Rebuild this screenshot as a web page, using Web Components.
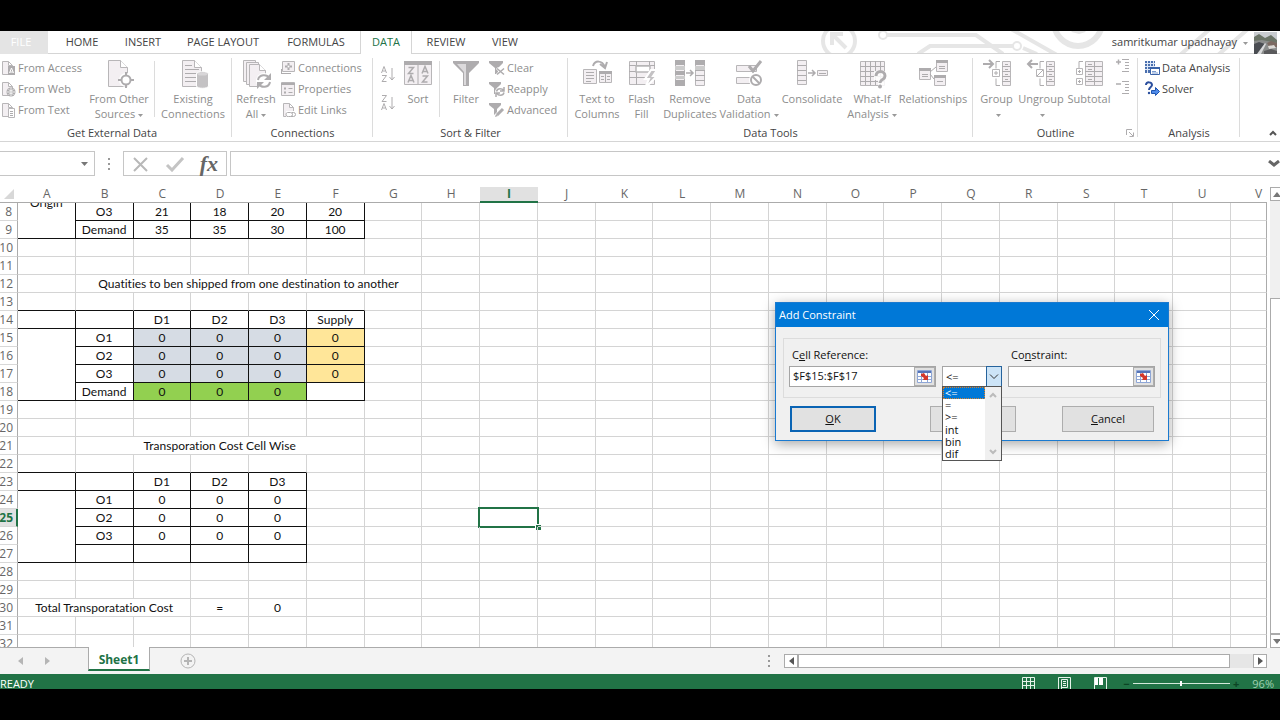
<!DOCTYPE html>
<html lang="en">
<head>
<meta charset="utf-8">
<title>Sheet1</title>
<style>
    html, body { height: 100%; }
    body {
        margin: 0;
        overflow: hidden;
        background: #000;
        color: #444;
        font: 11px/15px "Open Sans", "Noto Sans", sans-serif;
    }
</style>
</head>
<body>
<excel-window></excel-window>

<script>
const SMALL_PAGE = 'M2.5 1.5h6l4 4v9h-10z M8.5 1.5v4h4';

// [viewBox width, viewBox height, markup]
const ICONS = {
    access  : [16, 16, `<path class="o" d="${SMALL_PAGE}"/><rect class="d" x="8" y="6" width="7" height="9"/><path stroke="#fff" fill="none" d="M9.500 13l2-5 2 5M10 12h3"/>`],
    web     : [16, 16, `<path class="o" d="${SMALL_PAGE}"/><circle class="d" cx="11" cy="11" r="4.500"/><path stroke="#eee" fill="none" d="M7 11h8M11 7v8M8.500 8.500c2 1.500 3 1.500 5 0M8.500 13.500c2-1.500 3-1.500 5 0"/>`],
    text    : [16, 16, `<path class="o" d="${SMALL_PAGE}"/><path class="o w" d="M8.500 6.500h6v9h-6z"/><path class="l" d="M10 9.500h3M10 11.500h3M10 13.500h3"/>`],
    other   : [32, 32, `<path class="o" d="M5.500 3.500h12l7 7v19h-19z"/><path class="o w" d="M17.500 3.500v7h7"/><circle cx="23" cy="23" r="7" fill="#fff"/><circle class="l t" cx="23" cy="23" r="4.500"/><path class="l t" d="M23 15v4M23 27v4M15 23h4M27 23h4"/>`],
    existing: [32, 32, `<path class="o" d="M5.500 3.500h12l7 7v19h-19z"/><path class="o w" d="M17.500 3.500v7h7"/><path class="l" d="M8 8.500h7M8 12.500h14M8 16.500h11M8 20.500h11M8 24.500h11"/><path fill="#c4c2c4" stroke="#fff" d="M19.500 17v12c0 3 12 3 12 0V17c0-3-12-3-12 0z"/><ellipse cx="25.500" cy="17" rx="5" ry="1.500" fill="#d8d6d8"/>`],
    refresh : [32, 32, `<path class="o" d="M3.500 3.500h12v21h-12z"/><path class="o" d="M6.500 5.500h12v22h-12z"/><path class="o" d="M9.500 7.500h10l6 6v16h-16z"/><path class="o w" d="M19.500 7.500v6h6"/><circle cx="24" cy="24" r="8" fill="#fff"/><path class="l t" d="M18 23c1-6 9-6 11-2M30 25c-1 6-9 6-11 2"/><path class="d" d="M31 16v7h-7zM17 32v-7h7z"/>`],
    connect : [16, 16, `<path class="o" d="M2.500 1.500h12v10h-12z"/><path class="l t" d="M8.500 3v7M5 6.500h7"/><circle cx="8.500" cy="6.500" r="1" fill="#fff"/><path class="l" d="M1 13.500h10M1.500 9v5"/>`],
    props   : [16, 16, `<path class="o" d="M1.500 1.500h13v13h-13z"/><path class="l t" d="M1 3h14M4 7.500h2M4 11.500h2"/><path class="l" d="M8.500 7.500h4M8.500 11.500h4"/>`],
    links   : [16, 16, `<path class="o" d="M3.500 1.500h6l4 4v9h-10z M9.500 1.500v4h4"/><path fill="#fff" d="M6 9h10v7H6z"/><path class="l" d="M7.500 10.500h3a2 2 0 0 1 0 4h-2a2 2 0 0 1-1-4M12 10.500h1.500a2 2 0 0 1 0 4h-3"/>`],
    az      : [16, 20, `<path class="l" d="M1.500 9L4 2.500 6.500 9M2.500 7h3M2 11.500h4.500L2 17.500h4.500M12 4v12M9.500 13l2.500 3 2.500-3"/>`],
    za      : [16, 20, `<path class="l" d="M2 2.500h4.500L2 8.500h4.500M1.500 17L4 10.500 6.500 17M2.500 15h3M12 4v12M9.500 13l2.500 3 2.500-3"/>`],
    sort    : [32, 32, `<path class="o" d="M2.500 4.500h27v23h-27z"/><path class="d" d="M2 4h28v4H2z"/><path class="l" d="M16 8v19"/><path class="l m" d="M6.500 10.500h5l-5 6h5M6 25.500l3-7 3 7M7 23.500h4M20 16.500l3-7 3 7M21 14.500h4M20.500 19h5l-5 6h5"/>`],
    filter  : [32, 32, `<path class="d" d="M3 4h26v2L19 16v13h-6V16L3 6z"/><path fill="#dcdadc" d="M7 7h9v21h-2V15z"/>`],
    clear   : [16, 16, `<path class="d" d="M0 1h14v2L9 8v6H6V8L0 3z"/><path stroke="#fff" stroke-width="3" d="M8 8l7 7M15 8l-7 7"/><path class="l m" d="M8 8.500l7 6M15 8.500l-7 6"/>`],
    reapply : [16, 16, `<path class="d" d="M0 1h12v2L8 7v6H5V7L0 3z"/><circle cx="11" cy="11" r="5" fill="#fff"/><path class="l m" d="M7.500 10.500c1-4 6-3 7-1M15 11.500c-1 4-6 3-7 1M15 6v4h-4M7 16v-4h4"/>`],
    advanced: [16, 16, `<path class="d" d="M0 1h12v2L8 7v6H5V7L0 3z"/><path stroke="#fff" stroke-width="4" d="M6 15L15 6"/><path class="l k" d="M8 13l6-6"/><path class="d" d="M6 15l1-3 2 2z"/>`],
    columns : [32, 32, `<path class="o" d="M2.500 12.500h13v14h-13z"/><path class="l" d="M5 15.500h8M5 18.500h8M5 21.500h8M5 24.500h5"/><path class="o" d="M18.500 15.500h12v10h-12z"/><path class="d" d="M18 14h13v3H18z"/><path class="l" d="M24.500 16v9M20 19.500h3M20 22.500h3M26 19.500h3M26 22.500h3"/><path class="l t" d="M12 9c2-6 9-6 12 1M19 7l5 4 2-6"/>`],
    flash   : [32, 32, `<path class="o" d="M3.500 4.500h25v23h-25z"/><path class="l" d="M3 8.500h26M3 14.500h26M3 20.500h18M10.500 4v24M23.500 4v12"/><path class="o w m" d="M10 9h14v6H10z"/><path stroke="#fff" stroke-width="2" fill="#c4c2c4" d="M25 13h6l-4 6h4L19 31l4-9h-4z"/>`],
    remove  : [32, 32, `<path class="o" d="M1.500 3.500h9v25h-9zM21.500 3.500h9v25h-9z"/><path class="d" d="M1 3h10v5H1zM1 14h10v4H1zM1 23h10v6H1zM21 3h10v5H21z"/><path fill="#ccc" d="M1 9h10v4H1zM1 19h10v3H1zM21 9h10v4H21z"/><path class="l" d="M21 13.500h10M21 18.500h10M21 23.500h10"/><path class="l m" d="M12 16h7M16 13l3 3-3 3"/>`],
    validate: [32, 32, `<path class="o" d="M3.500 8.500h20v6h-20zM3.500 20.500h15v6h-15z"/><path class="l k" d="M16 9l4 5 8-10"/><circle cx="23" cy="23" r="7" fill="#fff"/><circle class="l t" cx="23" cy="23" r="5"/><path class="l t" d="M19.500 19.500l7 7"/>`],
    consol  : [32, 32, `<path class="o" d="M1.500 3.500h9v24h-9z"/><path class="l" d="M1 8.500h9M1 13.500h9M1 18.500h9M1 23.500h9"/><path class="l m" d="M12 16h7M16 13l3 3-3 3"/><path class="o" d="M21.500 13.500h10v5h-10z"/><path class="l" d="M23 16.500h7"/>`],
    whatif  : [32, 32, `<path class="o" d="M4.500 4.500h24v24h-24z"/><path class="l" d="M4 9.500h24M4 14.500h24M4 19.500h24M4 24.500h24M9.500 4v24M14.500 4v24M19.500 4v24M24.500 4v24"/><path fill="#fff" d="M18 14h13v18h-9v-9h-4z" opacity=".85"/><path class="l k" d="M20 19c0-6 9-6 9 0 0 4-5 3-5 7"/><circle class="d" cx="24" cy="29.500" r="2"/>`],
    relation: [32, 32, `<path class="o" d="M2.500 12.500h11v10h-11zM19.500 4.500h11v10h-11zM17.500 18.500h11v10h-11z"/><path class="d" d="M2 11h12v3H2zM19 3h12v3H19zM17 18h12v3H17z"/><path class="l" d="M13 15l6-5M13 17l4 5M5 17.500h6M5 19.500h6M22 9.500h6M22 11.500h6M20 24.500h6"/>`],
    group   : [32, 32, `<path class="l t" d="M2 7h10M8 3l4 4-4 4"/><path class="o" d="M21.500 4.500h8v24h-8z"/><path class="l" d="M21 9.500h8M21 14.500h8M21 19.500h8M21 24.500h8M24 7.500h3M24 12.500h3M24 17.500h3M24 22.500h3M19 4.500h-4v7M19 28.500h-4v-7"/><path class="o w" d="M11.500 12.500h7v7h-7z"/><path class="l" d="M15 14v4M13 16h4"/>`],
    ungroup : [32, 32, `<path class="l t" d="M3 7h10M7 3L3 7l4 4"/><path class="o" d="M21.500 4.500h8v24h-8z"/><path class="l" d="M21 9.500h8M21 14.500h8M21 19.500h8M21 24.500h8M24 7.500h3M24 12.500h3M24 17.500h3M24 22.500h3M19 4.500h-4v7M19 28.500h-4v-7"/><path class="o w" d="M11.500 12.500h7v7h-7z"/><path class="l" d="M12 19l6-6"/>`],
    subtotal: [32, 32, `<path class="o" d="M12.500 4.500h17v24h-17z"/><path class="l" d="M12 9.500h17M12 14.500h17M12 19.500h17M12 24.500h17M21.500 4v24M15 7.500h4M15 12.500h4M15 17.500h4M15 22.500h4M10 4.500H6v7"/><path class="o w" d="M3.500 11.500h6v6h-6zM3.500 21.500h6v6h-6z"/><path class="l" d="M6.500 13v3M5 14.500h3M6.500 23v3M5 24.500h3"/>`],
    detail  : [16, 16, `<path class="l m" d="M1 5h5M3.500 2.500v5"/><path class="l" d="M7 2.500h7M10 5.500h4M10 8.500h4M10 11.500h4M7 14.500h7"/>`],
    hide    : [16, 16, `<path class="l m" d="M1 5h5"/><path class="l" d="M7 2.500h7M10 5.500h4M10 8.500h4M10 11.500h4M7 14.500h7"/>`],
    analysis: [16, 16, `<path fill="#4a6fae" d="M1 1h10v12H1z"/><path stroke="#dfe8f7" fill="none" d="M1 3.500h10M1 6.500h10M1 9.500h10M3.500 1v12M6.500 1v12M9.500 1v6"/><path fill="#fff" stroke="#3b63a8" d="M6.500 7.500h9v7h-9z"/><path fill="#3b63a8" d="M6 7h10v2H6z"/><path stroke="#7a9bd0" d="M8 11.500h4M8 13h6"/>`],
    solver  : [16, 16, `<path fill="none" stroke="#2b4f9e" stroke-width="2" d="M2 4c0-4 6-3 6 0 0 2-3 2-3 5"/><circle fill="#2b4f9e" cx="5" cy="12" r="1.200"/><path fill="#4f8bea" stroke="#1f55b0" d="M7.500 9.500h4v-3l4 4-4 4v-2h-4z"/>`],
    launcher: [8, 8, `<path class="l" d="M.500 6V.500H6M3 3l4 4M7.500 3.500v4h-4"/>`],
    collapse: [8, 6, `<path fill="none" stroke="#555" stroke-width="2" d="M1 5l3-3 3 3"/>`],
    expand  : [12, 8, `<path fill="none" stroke="#666" stroke-width="3" d="M1 1l5 4 5-4"/>`],
    cancel  : [18, 16, `<path fill="none" stroke="#b8b8b8" stroke-width="2" d="M2 2l13 13M15 2L2 15"/>`],
    check   : [20, 16, `<path fill="none" stroke="#c4c4c4" stroke-width="3" d="M2 9l5 5L18 2"/>`],
    prev    : [5, 8, `<path fill="#b5b5b5" d="M5 0v8L0 4z"/>`],
    next    : [5, 8, `<path fill="#b5b5b5" d="M0 0v8l5-4z"/>`],
    left    : [5, 8, `<path fill="#555" d="M5 0v8L0 4z"/>`],
    right   : [5, 8, `<path fill="#555" d="M0 0v8l5-4z"/>`],
    up      : [8, 5, `<path fill="#777" d="M0 5h8L4 0z"/>`],
    down    : [8, 5, `<path fill="#777" d="M0 0h8L4 5z"/>`],
    caret   : [5, 3, `<path fill="#999" d="M0 0h5L2.500 3z"/>`],
    dark    : [7, 4, `<path fill="#777" d="M0 0h7L3.500 4z"/>`],
    add     : [16, 16, `<circle fill="none" stroke="#b5b5b5" cx="8" cy="8" r="7"/><path stroke="#b5b5b5" stroke-width="2" d="M4 8h8M8 4v8"/>`],
    normal  : [14, 12, `<path fill="none" stroke="#e6f3ea" d="M.500 12V.500h12V12M0 4.500h13M0 8.500h13M4.500 0v12M8.500 0v12"/>`],
    layout  : [14, 12, `<path fill="none" stroke="#e6f3ea" d="M.500 12V.500h12V12M3.500 12V2.500h6v8h-6M5 4.500h3M5 6.500h3M5 8.500h3"/>`],
    breaks  : [14, 12, `<path fill="none" stroke="#e6f3ea" d="M.500 12V.500h12V12"/><path fill="#fff" d="M1 1h3v7H1zM5 1h4v7H5z"/>`],
    close   : [10, 10, `<path fill="none" stroke="#fff" d="M0 0l10 10M10 0L0 10"/>`],
    chevron : [10, 6, `<path fill="none" stroke="#333" d="M1 .500l4 4 4-4"/>`],
    listup  : [8, 6, `<path fill="none" stroke="#bbb" stroke-width="2" d="M1 5l3-3 3 3"/>`],
    listdown: [8, 6, `<path fill="none" stroke="#bbb" stroke-width="2" d="M1 1l3 3 3-3"/>`],
    picker  : [15, 13, `<path fill="#fff" stroke="#8ea6d6" d="M.500.500h14v12H.500z"/><path fill="#5574b8" d="M1 1h13v2H1z"/><path stroke="#8ea6d6" d="M1 6.500h13M1 9.500h13M4.500 3v9M10.500 3v9"/><path fill="#d3382b" d="M4 4l3-1 2 3 2-1v5H6l1-2-3-2z"/>`],
    photo   : [23, 22, `<path fill="#c9ccd0" d="M0 0h23v22H0z"/><path fill="#6c7568" d="M0 5l5-3 6 4 6-3 6 5v5H0z"/><path fill="#8b8d8c" d="M0 9l8-1 15 3v11H0z"/><path fill="#4a4d52" d="M0 12l5-2 6 2-6 10H0z"/><path fill="#d9dadb" d="M3 22l8-11 1 1-5 10z"/><path fill="#7c6a62" d="M13 11l4-2 6 2v4h-8z"/><path fill="#dcdad6" d="M14 14l6-1 2 3-7 1z"/><path fill="#5a5a5c" d="M10 19l7-2 6 2v3H10z"/>`],
    circuit : [470, 22, `<g fill="none" stroke="#e6e6e6" stroke-width="4"><circle cx="29" cy="10" r="16"/><path d="M36 17L23 4M22 14V3h11"/><path d="M77 4h89l27 19M108 23l12-8h83M201-2l46 26M213 17l14 6M370 24l30-26M408 24l30-26"/></g><g fill="#fff" stroke="#e6e6e6" stroke-width="2"><circle cx="73" cy="4" r="4"/><circle cx="207" cy="15" r="4"/></g><circle fill="none" stroke="#e6e6e6" stroke-width="6" cx="268" cy="-9" r="24"/><path fill="none" stroke="#e6e6e6" stroke-width="4" d="M262-1l7 2 6-2"/>`]
};


class AppIcon extends HTMLElement {
    connectedCallback(){
        const [w, h, body] = ICONS[this.getAttribute('name')];
        this.attachShadow({ mode : 'open' });
        this.shadowRoot.innerHTML = `
            <style>
                :host { display: inline-block; flex: none; line-height: 0; }
                .o { fill: #f3eff2; stroke: #b8b6b8; }
                .w { fill: #fff; }
                .d { fill: #aeacae; }
                .l { fill: none; stroke: #aeacae; }
                .m { stroke-width: 1.5; }
                .t { stroke-width: 2; }
                .k { stroke-width: 3; }
            </style>
            <svg width="${w}" height="${h}" viewBox="0 0 ${w} ${h}" aria-hidden="true">${body}</svg>
        `;
    }
}


class RibbonTabs extends HTMLElement {
    connectedCallback(){
        this.attachShadow({ mode : 'open' });
        this.shadowRoot.innerHTML = `
            <style>
                :host {
                    display: flex;
                    position: relative;
                    height: 23px;
                    background: #fff;
                    box-shadow: inset 0 -1px #d5d5d5;
                }
                nav { display: flex; }
                button {
                    width: var(--w);
                    padding: 0 0 2px;
                    border: 0;
                    background: none;
                    color: #444;
                    font: inherit;
                    white-space: nowrap;
                }
                .file { background: #e4e4e4; color: #fff; margin-right: 4px; padding-right: 6px; }
                .active {
                    background: #fff;
                    color: #217346;
                    border: solid #d5d5d5;
                    border-width: 0 1px;
                }
                .art { position: absolute; right: 0; top: 0; }
                .user {
                    position: relative;
                    display: flex;
                    align-items: center;
                    gap: 6px;
                    margin-left: auto;
                    padding-right: 3px;
                }
                .user span { padding-bottom: 2px; }
            </style>
            <app-icon class="art" name="circuit"></app-icon>
            <nav>
                <button class="file" style="--w:48px">FILE</button>
                <button style="--w:60px">HOME</button>
                <button style="--w:62px">INSERT</button>
                <button style="--w:98px">PAGE LAYOUT</button>
                <button style="--w:88px">FORMULAS</button>
                <button class="active" style="--w:52px">DATA</button>
                <button style="--w:68px">REVIEW</button>
                <button style="--w:50px">VIEW</button>
            </nav>
            <div class="user">
                <span>samritkumar upadhayay</span>
                <app-icon name="caret"></app-icon>
                <app-icon name="photo"></app-icon>
            </div>
        `;
    }
}


class RibbonButton extends HTMLElement {
    connectedCallback(){
        const small = this.hasAttribute('small');
        const caret = this.hasAttribute('menu') ? '<app-icon name="caret"></app-icon>' : '';
        this.attachShadow({ mode : 'open' });
        this.shadowRoot.innerHTML = `
            <style>
                :host { display: block; flex: none; width: var(--w, auto); }
                button {
                    display: flex;
                    flex-direction: column;
                    align-items: center;
                    gap: 2px;
                    width: 100%;
                    padding: 0;
                    border: 0;
                    background: none;
                    color: var(--ink, #8d8d8d);
                    font: inherit;
                    text-align: center;
                    white-space: nowrap;
                }
                button.small { flex-direction: row; height: 21px; }
                .small .label { padding-bottom: 1px; }
                .label app-icon { margin-left: 3px; vertical-align: middle; }
            </style>
            <button class="${small ? 'small' : ''}">
                <app-icon name="${this.getAttribute('icon')}"></app-icon>
                <span class="label"><slot></slot>${caret}</span>
            </button>
        `;
    }
}


class RibbonGroup extends HTMLElement {
    connectedCallback(){
        const launcher = this.hasAttribute('launcher') ? '<app-icon name="launcher"></app-icon>' : '';
        this.attachShadow({ mode : 'open' });
        this.shadowRoot.innerHTML = `
            <style>
                :host {
                    display: flex;
                    flex-direction: column;
                    flex: none;
                    box-sizing: border-box;
                    width: var(--w);
                    padding-top: 3px;
                    position: relative;
                }
                :host::after {
                    content: '';
                    position: absolute;
                    inset: 4px 0 4px auto;
                    width: 1px;
                    background: #dcdcdc;
                }
                .tools { display: flex; height: 68px; padding-left: 3px; }
                footer { text-align: center; white-space: nowrap; }
                footer app-icon { position: absolute; right: 4px; bottom: 4px; }
            </style>
            <div class="tools"><slot></slot></div>
            <footer>${this.getAttribute('label')}${launcher}</footer>
        `;
    }
}


class DataRibbon extends HTMLElement {
    connectedCallback(){
        this.attachShadow({ mode : 'open' });
        this.shadowRoot.innerHTML = `
            <style>
                :host {
                    display: flex;
                    height: 87px;
                    background: #fff;
                    border-bottom: 1px solid #d5d5d5;
                }
                .edge { margin-left: -8px; }
                .stack { display: flex; flex-direction: column; align-items: flex-start; flex: none; width: var(--w); }
                .order { padding-top: 7px; gap: 9px; }
                .levels { gap: 6px; }
                hr { width: 1px; height: 56px; margin: 4px 3px; border: 0; background: #dcdcdc; }
                .collapse { margin: auto 3px 5px auto; padding: 0; border: 0; background: none; line-height: 0; }
            </style>
            <ribbon-group class="edge" label="Get External Data" style="--w:240px">
                <div class="stack" style="--w:92px; padding-left:5px; box-sizing:border-box">
                    <ribbon-button small icon="access">From Access</ribbon-button>
                    <ribbon-button small icon="web">From Web</ribbon-button>
                    <ribbon-button small icon="text">From Text</ribbon-button>
                </div>
                <ribbon-button icon="other" menu style="--w:64px">From Other<br>Sources</ribbon-button>
                <hr>
                <ribbon-button icon="existing" style="--w:70px">Existing<br>Connections</ribbon-button>
            </ribbon-group>
            <ribbon-group label="Connections" style="--w:141px">
                <ribbon-button icon="refresh" menu style="--w:42px">Refresh<br>All</ribbon-button>
                <div class="stack" style="--w:90px; padding-left:3px">
                    <ribbon-button small icon="connect">Connections</ribbon-button>
                    <ribbon-button small icon="props">Properties</ribbon-button>
                    <ribbon-button small icon="links">Edit Links</ribbon-button>
                </div>
            </ribbon-group>
            <ribbon-group label="Sort &amp; Filter" style="--w:195px">
                <div class="stack order" style="--w:20px; padding-left:4px">
                    <app-icon name="az"></app-icon>
                    <app-icon name="za"></app-icon>
                </div>
                <ribbon-button icon="sort" style="--w:36px">Sort</ribbon-button>
                <hr>
                <ribbon-button icon="filter" style="--w:46px">Filter</ribbon-button>
                <div class="stack" style="--w:78px">
                    <ribbon-button small icon="clear">Clear</ribbon-button>
                    <ribbon-button small icon="reapply">Reapply</ribbon-button>
                    <ribbon-button small icon="advanced">Advanced</ribbon-button>
                </div>
            </ribbon-group>
            <ribbon-group label="Data Tools" style="--w:405px">
                <ribbon-button icon="columns" style="--w:52px">Text to<br>Columns</ribbon-button>
                <ribbon-button icon="flash" style="--w:37px">Flash<br>Fill</ribbon-button>
                <ribbon-button icon="remove" style="--w:60px">Remove<br>Duplicates</ribbon-button>
                <ribbon-button icon="validate" menu style="--w:58px">Data<br>Validation</ribbon-button>
                <ribbon-button icon="consol" style="--w:68px">Consolidate</ribbon-button>
                <ribbon-button icon="whatif" menu style="--w:52px">What-If<br>Analysis</ribbon-button>
                <ribbon-button icon="relation" style="--w:70px">Relationships</ribbon-button>
            </ribbon-group>
            <ribbon-group label="Outline" launcher style="--w:165px">
                <ribbon-button icon="group" menu style="--w:41px">Group<br></ribbon-button>
                <ribbon-button icon="ungroup" menu style="--w:48px">Ungroup<br></ribbon-button>
                <ribbon-button icon="subtotal" style="--w:48px">Subtotal</ribbon-button>
                <div class="stack levels" style="--w:18px; padding-left:2px">
                    <app-icon name="detail"></app-icon>
                    <app-icon name="hide"></app-icon>
                </div>
            </ribbon-group>
            <ribbon-group label="Analysis" style="--w:102px; --ink:#444">
                <div class="stack" style="--w:90px; padding-left:3px">
                    <ribbon-button small icon="analysis">Data Analysis</ribbon-button>
                    <ribbon-button small icon="solver">Solver</ribbon-button>
                </div>
            </ribbon-group>
            <button class="collapse" aria-label="Collapse"><app-icon name="collapse"></app-icon></button>
        `;
    }
}


class FormulaBar extends HTMLElement {
    connectedCallback(){
        this.attachShadow({ mode : 'open' });
        this.shadowRoot.innerHTML = `
            <style>
                :host {
                    display: flex;
                    align-items: stretch;
                    height: 25px;
                    padding: 9px 0 11px;
                    background: #fff;
                }
                input { min-width: 0; border: 0; padding: 0; background: none; outline: 0; font: inherit; }
                .box { display: flex; align-items: center; box-sizing: border-box; border: 1px solid #c6c6c6; }
                .name { width: 95px; border-left: 0; padding-right: 6px; }
                .name input { flex: 1; }
                .grip { width: 28px; display: grid; place-content: center; gap: 3px; }
                .grip i { width: 2px; height: 2px; background: #999; }
                .tools { width: 104px; justify-content: space-between; padding: 0 8px; }
                .fx { color: #666; font: italic bold 22px/20px "Liberation Serif", serif; }
                .formula { flex: 1; margin-left: 3px; border-right: 0; }
                .formula input { flex: 1; }
            </style>
            <div class="box name"><input aria-label="Name Box"><app-icon name="dark"></app-icon></div>
            <div class="grip"><i></i><i></i><i></i></div>
            <div class="box tools">
                <app-icon name="cancel"></app-icon>
                <app-icon name="check"></app-icon>
                <span class="fx">fx</span>
            </div>
            <div class="box formula"><input aria-label="Formula"><app-icon name="expand"></app-icon></div>
        `;
    }
}


const COLS = 'ABCDEFGHIJKLMNOPQRSTUV'.split('');
const FIRST_ROW = 6;
const LAST_ROW  = 32;

const VALUES = {
    A6 : 'Origin',
    B8 : 'O3',     C8 : '21', D8 : '18', E8 : '20', F8 : '20',
    B9 : 'Demand', C9 : '35', D9 : '35', E9 : '30', F9 : '100',
    B12 : 'Quatities to ben shipped from one destination to another',
    C14 : 'D1', D14 : 'D2', E14 : 'D3', F14 : 'Supply',
    B15 : 'O1', C15 : '0', D15 : '0', E15 : '0', F15 : '0',
    B16 : 'O2', C16 : '0', D16 : '0', E16 : '0', F16 : '0',
    B17 : 'O3', C17 : '0', D17 : '0', E17 : '0', F17 : '0',
    B18 : 'Demand', C18 : '0', D18 : '0', E18 : '0',
    B21 : 'Transporation Cost Cell Wise',
    C23 : 'D1', D23 : 'D2', E23 : 'D3',
    B24 : 'O1', C24 : '0', D24 : '0', E24 : '0',
    B25 : 'O2', C25 : '0', D25 : '0', E25 : '0',
    B26 : 'O3', C26 : '0', D26 : '0', E26 : '0',
    A30 : 'Total Transporatation Cost', D30 : '=', E30 : '0'
};
const MERGES = ['A6:A9', 'B12:G12', 'A15:A18', 'B21:F21', 'A24:A27', 'A30:C30'];
const BOXES  = ['A6:F9', 'A14:F18', 'A23:E27'];
const FILLS  = { 'C15:E17' : 'blue', 'F15:F17' : 'yellow', 'C18:E18' : 'green' };

class SheetGrid extends HTMLElement {
    range(ref){
        const [, c1, r1, c2, r2] = ref.match(/(\D+)(\d+):(\D+)(\d+)/);
        return { c1 : COLS.indexOf(c1), r1 : +r1, c2 : COLS.indexOf(c2), r2 : +r2 };
    }

    mark(cls, c1, r1, c2, r2){
        for(let r = r1; r <= r2; r++){
            for(let c = Math.max(c1, 0); c <= c2; c++){
                const key = COLS[c] + r;
                this.classes[key] = (this.classes[key] || '') + ' ' + cls;
            }
        }
    }

    rows(){
        this.classes = {};
        const spans  = {};
        const hidden = new Set();

        BOXES.forEach(ref => {
            const { c1, r1, c2, r2 } = this.range(ref);
            this.mark('right', c1 - 1, r1, c2, r2);
            this.mark('bottom', c1, r1 - 1, c2, r2);
        });
        for(const ref in FILLS){
            const { c1, r1, c2, r2 } = this.range(ref);
            this.mark(FILLS[ref], c1, r1, c2, r2);
        }
        MERGES.forEach(ref => {
            const { c1, r1, c2, r2 } = this.range(ref);
            for(let r = r1; r <= r2; r++)
                for(let c = c1; c <= c2; c++) hidden.add(COLS[c] + r);
            hidden.delete(COLS[c1] + r1);
            spans[COLS[c1] + r1] = `colspan="${c2 - c1 + 1}" rowspan="${r2 - r1 + 1}"`;
        });
        this.mark('active', 8, 25, 8, 25);

        let html = '';
        for(let r = FIRST_ROW; r <= LAST_ROW; r++){
            html += `<tr><th class="${r === 25 ? 'on' : ''}">${r < 8 ? '' : r}</th>`;
            COLS.forEach(c => {
                const key = c + r;
                if(hidden.has(key)) return;
                html += `<td class="${this.classes[key] || ''}" ${spans[key] || ''}>${VALUES[key] || ''}</td>`;
            });
            html += '</tr>';
        }
        return html;
    }

    connectedCallback(){
        const cols = '<colgroup><col class="nums">' + '<col>'.repeat(21) + '<col class="last"></colgroup>';
        this.attachShadow({ mode : 'open' });
        this.shadowRoot.innerHTML = `
            <style>
                :host { display: flex; flex: 1; min-height: 0; background: #fff; }
                .sheet { flex: 1; min-width: 0; display: flex; flex-direction: column; }
                .view { flex: 1; min-height: 0; overflow: hidden; border-bottom: 1px solid #ababab; }
                table { width: 100%; table-layout: fixed; border-spacing: 0; flex: none; }
                /* rows 6 and 7 are scrolled out of view */
                .body { margin-top: -36px; }
                .nums { width: 18px; }
                .last { width: 36px; }
                th, td { box-sizing: border-box; padding: 0; white-space: nowrap; text-align: center; }
                th { color: #666; font-size: 12px; font-weight: normal; }
                thead th { height: 16px; line-height: 14px; padding-bottom: 1px; border-bottom: 1px solid #ababab; }
                thead th:last-child { text-align: left; padding-left: 24px; overflow: hidden; }
                thead th.on { background: #e1e1e1; color: #217346; font-weight: bold; border-bottom-color: #217346; box-shadow: inset 0 -1px #217346; }
                .corner svg { display: block; margin-left: auto; margin-right: 4px; }
                .body th {
                    height: 18px;
                    line-height: 16px;
                    border-right: 1px solid #ababab;
                    border-bottom: 1px solid #d8d8d8;
                    overflow: hidden;
                    direction: rtl;
                    padding-right: 5px;
                    text-align: right;
                }
                .body th.on { background: #e1e1e1; color: #217346; font-weight: bold; border-right: 2px solid #217346; padding-right: 4px; }
                td {
                    position: relative;
                    height: 18px;
                    line-height: 17px;
                    border: solid #d4d4d4;
                    border-width: 0 1px 1px 0;
                    color: #111;
                    font-family: Lato, sans-serif;
                    font-size: 12px;
                    font-variant-ligatures: none;
                }
                td.right { border-right-color: #111; }
                td.bottom { border-bottom-color: #111; }
                td:last-child { border-right-color: #ababab; }
                .blue { background: #d6dce4; }
                .yellow { background: #ffe699; }
                .green { background: #92d050; }
                .active::before { content: ''; position: absolute; inset: -2px; border: 2px solid #217346; }
                .active::after {
                    content: '';
                    position: absolute;
                    right: -4px;
                    bottom: -4px;
                    width: 5px;
                    height: 5px;
                    background: #217346;
                    border: solid #fff;
                    border-width: 1px 0 0 1px;
                }
                .scroll { width: 10px; margin-left: 3px; display: flex; flex-direction: column; background: #f0f0f0; overflow: hidden; }
                .scroll button, .scroll i { box-sizing: border-box; width: 14px; border: 1px solid #ababab; background: #fff; padding: 0; }
                .scroll button { height: 14px; display: grid; place-content: center; flex: none; }
                .scroll i { flex: 336; }
                .scroll span { flex: 98; }
            </style>
            <div class="sheet">
                <table>${cols}<thead><tr>
                    <th class="corner"><svg width="10" height="10"><path fill="#d8d8d8" d="M10 0v10H0z"/></svg></th>
                    ${COLS.map(c => `<th class="${c === 'I' ? 'on' : ''}">${c}</th>`).join('')}
                </tr></thead></table>
                <div class="view"><table class="body">${cols}<tbody>${this.rows()}</tbody></table></div>
            </div>
            <div class="scroll">
                <button aria-label="Scroll up"><app-icon name="up"></app-icon></button>
                <span></span>
                <i></i>
                <button aria-label="Scroll down"><app-icon name="down"></app-icon></button>
            </div>
        `;
    }
}


class SheetTabs extends HTMLElement {
    connectedCallback(){
        this.attachShadow({ mode : 'open' });
        this.shadowRoot.innerHTML = `
            <style>
                :host { display: flex; height: 26px; background: #f3f3f3; }
                button { padding: 0; border: 0; background: none; display: grid; place-content: center; }
                .nav { display: flex; gap: 22px; width: 88px; box-sizing: border-box; padding: 0 0 0 18px; }
                .tab {
                    width: 62px;
                    height: 24px;
                    margin-top: -1px;
                    padding-top: 3px;
                    background: #fff;
                    border: solid #ababab;
                    border-width: 0 1px;
                    border-bottom: 2px solid #217346;
                    color: #217346;
                    font: bold 12px/19px "Open Sans", sans-serif;
                }
                .add { margin: 0 30px; }
                .grip { margin: auto 14px auto auto; display: grid; gap: 3px; }
                .grip i { width: 2px; height: 2px; background: #999; }
                .bar { display: flex; flex: 0 0 483px; height: 14px; margin: 6px 13px 0 0; background: #e6e6e6; }
                .bar button { width: 14px; }
                .bar button, .bar i { box-sizing: border-box; border: 1px solid #ababab; background: #fff; }
                .bar i { flex: 1; margin-right: 23px; }
            </style>
            <div class="nav">
                <button aria-label="Previous sheet"><app-icon name="prev"></app-icon></button>
                <button aria-label="Next sheet"><app-icon name="next"></app-icon></button>
            </div>
            <button class="tab">Sheet1</button>
            <button class="add" aria-label="New sheet"><app-icon name="add"></app-icon></button>
            <div class="grip"><i></i><i></i><i></i></div>
            <div class="bar">
                <button aria-label="Scroll left"><app-icon name="left"></app-icon></button>
                <i></i>
                <button aria-label="Scroll right"><app-icon name="right"></app-icon></button>
            </div>
        `;
    }
}


class StatusBar extends HTMLElement {
    connectedCallback(){
        this.attachShadow({ mode : 'open' });
        this.shadowRoot.innerHTML = `
            <style>
                :host {
                    display: flex;
                    height: 15px;
                    align-items: flex-end;
                    background: #217346;
                    color: #fff;
                    overflow: hidden;
                    line-height: 11px;
                }
                .views { display: flex; gap: 22px; margin-left: auto; margin-right: 15px; }
                .zoom { display: flex; align-items: center; gap: 3px; height: 11px; width: 116px; }
                .sign { color: #0c4424; font-weight: bold; }
                input { appearance: none; flex: 1; min-width: 0; height: 11px; margin: 0; background: linear-gradient(#d5eadc, #d5eadc) center / 100% 1px no-repeat; }
                input::-webkit-slider-thumb { appearance: none; width: 2px; height: 5px; background: #fff; }
                .pct { color: #9fd0b0; margin: 0 6px 0 13px; }
            </style>
            <span>READY</span>
            <div class="views">
                <app-icon name="normal"></app-icon>
                <app-icon name="layout"></app-icon>
                <app-icon name="breaks"></app-icon>
            </div>
            <div class="zoom">
                <span class="sign">−</span>
                <input type="range" aria-label="Zoom" min="0" max="100" value="50">
                <span class="sign">+</span>
            </div>
            <span class="pct">96%</span>
        `;
    }
}


const OPERATORS = ['<=', '=', '>=', 'int', 'bin', 'dif'];

class ConstraintDialog extends HTMLElement {
    connectedCallback(){
        const names = OPERATORS.map(o => o.replace('<', '&lt;').replace('>', '&gt;'));
        this.attachShadow({ mode : 'open' });
        this.shadowRoot.innerHTML = `
            <style>
                :host {
                    display: block;
                    box-sizing: border-box;
                    width: 394px;
                    background: #f0f0f0;
                    border: 1px solid #1a7ad0;
                    box-shadow: 0 3px 12px rgba(0, 0, 0, .35);
                    color: #111;
                }
                header {
                    display: flex;
                    align-items: center;
                    justify-content: space-between;
                    height: 24px;
                    padding: 0 9px 0 3px;
                    background: #0078d7;
                    color: #fff;
                }
                header span { padding-bottom: 2px; }
                header button { padding: 0; border: 0; background: none; line-height: 0; }
                .fields {
                    display: flex;
                    margin: 11px 7px 0;
                    padding: 8px 5px 10px;
                    border: 1px solid #dcdcdc;
                    align-items: flex-end;
                }
                label { display: block; margin: 0 0 4px 3px; }
                .box { display: flex; box-sizing: border-box; height: 21px; width: 147px; border: 1px solid #a5a5a5; background: #fff; }
                .box input { flex: 1; min-width: 0; border: 0; padding: 0 3px 2px; outline: 0; background: none; font: inherit; color: inherit; }
                .pick { display: grid; place-content: center; width: 21px; padding: 0; border: 1px solid #adadad; background: #e1e1e1; }
                .op { position: relative; flex: none; width: 60px; margin: 0 6px; }
                .op select {
                    display: block;
                    appearance: none;
                    box-sizing: border-box;
                    width: 100%;
                    height: 21px;
                    padding: 0 3px 1px;
                    border: 1px solid #a5a5a5;
                    border-radius: 0;
                    background: #fff;
                    font: inherit;
                    color: inherit;
                }
                .arrow {
                    position: absolute;
                    top: 0;
                    right: 0;
                    box-sizing: border-box;
                    width: 16px;
                    height: 21px;
                    display: grid;
                    place-content: center;
                    border: 1px solid #26639c;
                    background: #cce4f7;
                    pointer-events: none;
                }
                .list {
                    position: absolute;
                    z-index: 1;
                    top: 20px;
                    left: 0;
                    right: 0;
                    box-sizing: border-box;
                    height: 75px;
                    display: flex;
                    border: 1px solid #555;
                    background: #fff;
                }
                ul { display: flex; flex-direction: column; flex: 1; margin: 0; padding: 0; list-style: none; }
                li { flex: 1; display: flex; align-items: center; padding-left: 2px; line-height: 12px; }
                li[aria-selected=true] { background: #0078d7; color: #fff; outline: 1px dotted #d9822b; outline-offset: -1px; }
                .bar { width: 16px; display: flex; flex-direction: column; align-items: center; justify-content: space-between; padding: 5px 0; box-sizing: border-box; background: #f0f0f0; }
                footer { display: flex; justify-content: space-between; padding: 8px 14px; }
                footer button { width: 86px; height: 26px; padding: 0 0 2px; border: 1px solid #adadad; background: #e1e1e1; font: inherit; color: inherit; }
                footer .ok { border: 2px solid #0a64b4; }
                footer .cancel { width: 92px; }
                .add { margin-left: 7px; }
            </style>
            <header><span>Add Constraint</span><button aria-label="Close"><app-icon name="close"></app-icon></button></header>
            <div class="fields">
                <div>
                    <label for="ref">C<u>e</u>ll Reference:</label>
                    <div class="box">
                        <input id="ref" value="$F$15:$F$17">
                        <button class="pick" aria-label="Select range"><app-icon name="picker"></app-icon></button>
                    </div>
                </div>
                <div class="op">
                    <select aria-label="Operator">${names.map(o => `<option>${o}</option>`).join('')}</select>
                    <span class="arrow"><app-icon name="chevron"></app-icon></span>
                    <div class="list">
                        <ul role="listbox" aria-label="Operators">
                            ${names.map((o, i) => `<li role="option" aria-selected="${i === 0}">${o}</li>`).join('')}
                        </ul>
                        <div class="bar"><app-icon name="listup"></app-icon><app-icon name="listdown"></app-icon></div>
                    </div>
                </div>
                <div>
                    <label for="con">Co<u>n</u>straint:</label>
                    <div class="box">
                        <input id="con">
                        <button class="pick" aria-label="Select range"><app-icon name="picker"></app-icon></button>
                    </div>
                </div>
            </div>
            <footer>
                <button class="ok"><u>O</u>K</button>
                <button class="add" aria-label="Add"></button>
                <button class="cancel"><u>C</u>ancel</button>
            </footer>
        `;
    }
}


class ExcelWindow extends HTMLElement {
    connectedCallback(){
        this.attachShadow({ mode : 'open' });
        this.shadowRoot.innerHTML = `
            <style>
                :host {
                    display: flex;
                    flex-direction: column;
                    box-sizing: border-box;
                    height: 100vh;
                    padding: 31px 0;
                    position: relative;
                    overflow: hidden;
                }
                constraint-dialog { position: absolute; left: 775px; top: 302px; }
            </style>
            <ribbon-tabs></ribbon-tabs>
            <data-ribbon></data-ribbon>
            <formula-bar></formula-bar>
            <sheet-grid></sheet-grid>
            <sheet-tabs></sheet-tabs>
            <status-bar></status-bar>
            <constraint-dialog></constraint-dialog>
        `;
    }
}

customElements.define('app-icon', AppIcon);
customElements.define('ribbon-tabs', RibbonTabs);
customElements.define('ribbon-button', RibbonButton);
customElements.define('ribbon-group', RibbonGroup);
customElements.define('data-ribbon', DataRibbon);
customElements.define('formula-bar', FormulaBar);
customElements.define('sheet-grid', SheetGrid);
customElements.define('sheet-tabs', SheetTabs);
customElements.define('status-bar', StatusBar);
customElements.define('constraint-dialog', ConstraintDialog);
customElements.define('excel-window', ExcelWindow);
</script>
</body>
</html>
